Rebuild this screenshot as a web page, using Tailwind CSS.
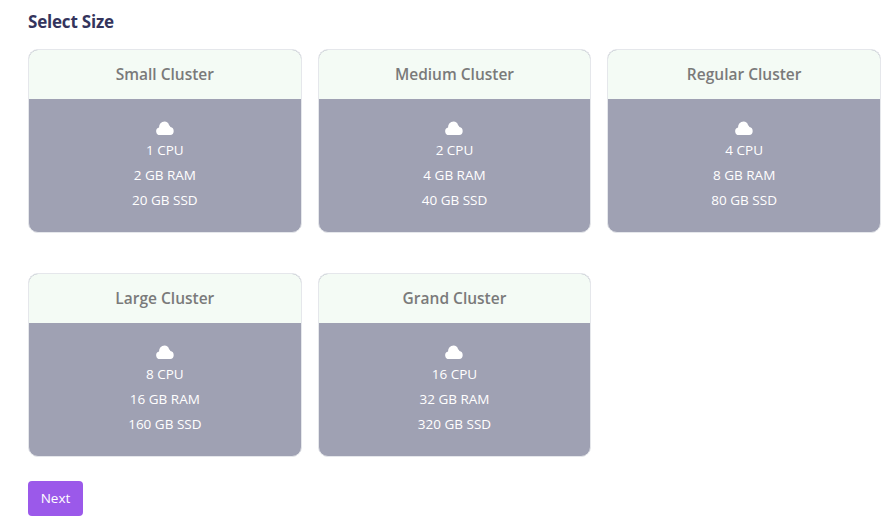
<!DOCTYPE html>
<html lang="en">
<head>
    <meta charset="UTF-8">
    <meta name="viewport" content="width=device-width, initial-scale=1.0">
    <title>Select Size</title>
    <script src="https://cdn.jsdelivr.net/npm/@tailwindcss/browser@4"></script>
</head>
<body class="bg-white font-['Open_Sans',sans-serif] overflow-hidden">
    <div class="w-[891px] h-[528px] pl-[28px] pr-[10px] pt-[12px]">
        <h2 class="text-[17px] leading-[20px] font-bold tracking-[-0.2px] text-[#34345c] mb-[17px]">Select Size</h2>

        <div class="grid grid-cols-3 gap-x-4 gap-y-[40px]">
            <!-- Small -->
            <div class="h-[184px] rounded-[10px] border border-[#e5e7eb] overflow-hidden bg-[#9fa1b3]">
                <div class="h-[49px] bg-[#f4fbf5] flex items-center justify-center text-[15.5px] font-semibold text-[#7a7a7a]">Small Cluster</div>
                <div class="pt-[22px] flex flex-col items-center text-[13.5px] leading-[25px] text-white">
                    <svg class="w-[18px] h-[14px] mb-[3px]" viewBox="0 0 18 14" fill="#fff"><path d="M4 14a3.8 3.8 0 0 1-.9-7.5A5.4 5.4 0 0 1 8.5.6a5 5 0 0 1 4.6 3.6 3 3 0 0 1 1.3 1.9A4 4 0 0 1 14.2 14z"/></svg>
                    <p>1 CPU</p>
                    <p>2 GB RAM</p>
                    <p>20 GB SSD</p>
                </div>
            </div>
            <!-- Medium -->
            <div class="h-[184px] rounded-[10px] border border-[#e5e7eb] overflow-hidden bg-[#9fa1b3]">
                <div class="h-[49px] bg-[#f4fbf5] flex items-center justify-center text-[15.5px] font-semibold text-[#7a7a7a]">Medium Cluster</div>
                <div class="pt-[22px] flex flex-col items-center text-[13.5px] leading-[25px] text-white">
                    <svg class="w-[18px] h-[14px] mb-[3px]" viewBox="0 0 18 14" fill="#fff"><path d="M4 14a3.8 3.8 0 0 1-.9-7.5A5.4 5.4 0 0 1 8.5.6a5 5 0 0 1 4.6 3.6 3 3 0 0 1 1.3 1.9A4 4 0 0 1 14.2 14z"/></svg>
                    <p>2 CPU</p>
                    <p>4 GB RAM</p>
                    <p>40 GB SSD</p>
                </div>
            </div>
            <!-- Regular -->
            <div class="h-[184px] rounded-[10px] border border-[#e5e7eb] overflow-hidden bg-[#9fa1b3]">
                <div class="h-[49px] bg-[#f4fbf5] flex items-center justify-center text-[15.5px] font-semibold text-[#7a7a7a]">Regular Cluster</div>
                <div class="pt-[22px] flex flex-col items-center text-[13.5px] leading-[25px] text-white">
                    <svg class="w-[18px] h-[14px] mb-[3px]" viewBox="0 0 18 14" fill="#fff"><path d="M4 14a3.8 3.8 0 0 1-.9-7.5A5.4 5.4 0 0 1 8.5.6a5 5 0 0 1 4.6 3.6 3 3 0 0 1 1.3 1.9A4 4 0 0 1 14.2 14z"/></svg>
                    <p>4 CPU</p>
                    <p>8 GB RAM</p>
                    <p>80 GB SSD</p>
                </div>
            </div>
            <!-- Large -->
            <div class="h-[184px] rounded-[10px] border border-[#e5e7eb] overflow-hidden bg-[#9fa1b3]">
                <div class="h-[49px] bg-[#f4fbf5] flex items-center justify-center text-[15.5px] font-semibold text-[#7a7a7a]">Large Cluster</div>
                <div class="pt-[22px] flex flex-col items-center text-[13.5px] leading-[25px] text-white">
                    <svg class="w-[18px] h-[14px] mb-[3px]" viewBox="0 0 18 14" fill="#fff"><path d="M4 14a3.8 3.8 0 0 1-.9-7.5A5.4 5.4 0 0 1 8.5.6a5 5 0 0 1 4.6 3.6 3 3 0 0 1 1.3 1.9A4 4 0 0 1 14.2 14z"/></svg>
                    <p>8 CPU</p>
                    <p>16 GB RAM</p>
                    <p>160 GB SSD</p>
                </div>
            </div>
            <!-- Grand -->
            <div class="h-[184px] rounded-[10px] border border-[#e5e7eb] overflow-hidden bg-[#9fa1b3]">
                <div class="h-[49px] bg-[#f4fbf5] flex items-center justify-center text-[15.5px] font-semibold text-[#7a7a7a]">Grand Cluster</div>
                <div class="pt-[22px] flex flex-col items-center text-[13.5px] leading-[25px] text-white">
                    <svg class="w-[18px] h-[14px] mb-[3px]" viewBox="0 0 18 14" fill="#fff"><path d="M4 14a3.8 3.8 0 0 1-.9-7.5A5.4 5.4 0 0 1 8.5.6a5 5 0 0 1 4.6 3.6 3 3 0 0 1 1.3 1.9A4 4 0 0 1 14.2 14z"/></svg>
                    <p>16 CPU</p>
                    <p>32 GB RAM</p>
                    <p>320 GB SSD</p>
                </div>
            </div>
        </div>

        <button class="mt-[24px] w-[55px] h-[35px] rounded-[4px] bg-[#9b59ea] text-white text-[13.5px]">Next</button>
    </div>
</body>
</html>
